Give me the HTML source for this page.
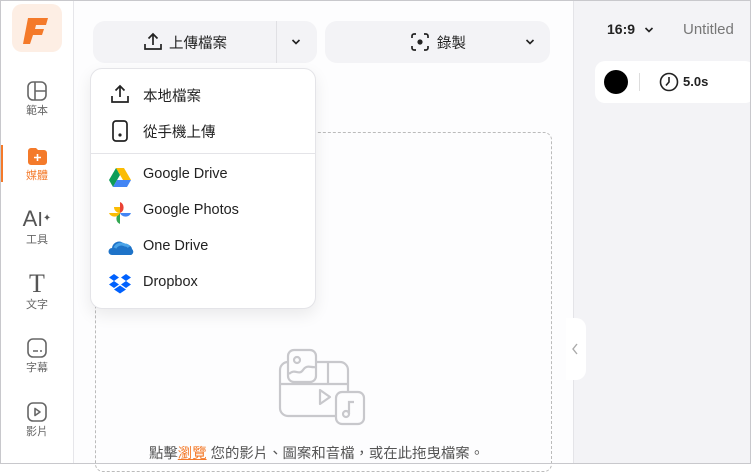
<!DOCTYPE html><html><head><meta charset="utf-8"><style>
*{box-sizing:border-box;margin:0;padding:0}
body{width:751px;height:464px;overflow:hidden;background:#fff;font-family:"Liberation Sans","Noto Sans CJK TC",sans-serif;position:relative;color:#222}
.frame{position:absolute;inset:0;border:1px solid #c8c8cc;pointer-events:none;z-index:10}
.side{position:absolute;left:0;top:0;width:74px;height:464px;background:#fff;border-right:1px solid #e6e6ea}
.logo{position:absolute;left:12px;top:4px;width:50px;height:48px;background:#fdeee4;border-radius:10px}
.item{position:absolute;left:0;width:74px;text-align:center;font-size:11px;color:#666}
.main{position:absolute;left:74px;top:0;width:499px;height:464px;background:#fdfdfe}
.right{position:absolute;left:573px;top:0;width:178px;height:464px;background:#f3f3f6;border-left:1px solid #e4e4e8}
.btn{position:absolute;top:21px;height:42px;background:#f3f3f6;border-radius:12px}
.menu{position:absolute;left:90px;top:68px;width:226px;height:241px;background:#fff;border:1px solid #e4e4e8;border-radius:12px;box-shadow:0 6px 16px rgba(0,0,0,.08);z-index:5}
.mi{position:absolute;left:52px;font-size:14.5px;color:#222}
.dash{position:absolute;left:95px;top:132px;width:457px;height:340px;border:1px dashed #bbb;border-radius:8px}
</style></head><body>
<div class="side">
<div class="logo"><svg width="50" height="48"><path d="M16 14h20l-2 7H24l-1 4h9l-2 6h-9l-3 9h-7z" fill="#f47a2a"/></svg></div>
<div style="position:absolute;left:0;top:145px;width:3px;height:37px;background:#f47a2a"></div>
<div class="item" style="top:80px"><svg width="22" height="22"><rect x="2" y="2" width="18" height="18" rx="5" fill="none" stroke="#666" stroke-width="1.6"/><path d="M9 2v18M9 11h11" stroke="#666" stroke-width="1.6"/></svg><div style="margin-top:-3px">範本</div></div>
<div class="item" style="top:145px;color:#f47a2a"><svg width="22" height="22"><path d="M2 6a3 3 0 0 1 3-3h5l2 2h6a3 3 0 0 1 3 3v9a3 3 0 0 1-3 3H5a3 3 0 0 1-3-3z" fill="#f47a2a"/><path d="M11.5 9v7M8 12.5h7" stroke="#fff" stroke-width="1.6"/></svg><div style="margin-top:-3px">媒體</div></div>
<div class="item" style="top:208px"><div style="font-size:22px;line-height:22px;color:#555">A<span style="font-size:20px">I</span><span style="font-size:10px;vertical-align:top">✦</span></div><div style="margin-top:0px">工具</div></div>
<div class="item" style="top:272px"><div style="font-size:26px;line-height:24px;color:#555;font-family:'Liberation Serif',serif">T</div><div>文字</div></div>
<div class="item" style="top:337px"><svg width="22" height="22"><rect x="2" y="2" width="18" height="18" rx="5" fill="none" stroke="#666" stroke-width="1.6"/><path d="M7 14h5M14 14h2" stroke="#666" stroke-width="1.6"/></svg><div style="margin-top:-3px">字幕</div></div>
<div class="item" style="top:401px"><svg width="22" height="22"><rect x="2" y="2" width="18" height="18" rx="5" fill="none" stroke="#666" stroke-width="1.6"/><path d="M9 7.5v7l5-3.5z" fill="none" stroke="#666" stroke-width="1.6" stroke-linejoin="round"/></svg><div style="margin-top:-3px">影片</div></div>
</div>
<div class="main"></div>
<div class="dash"></div>
<div class="btn" style="left:93px;width:224px"><div style="position:absolute;left:183px;top:0;width:1px;height:42px;background:#e0e0e4"></div>
<svg style="position:absolute;left:50px;top:11px" width="20" height="20"><path d="M10 13V2M5.5 6.5 10 2l4.5 4.5M2 12v5h16v-5" fill="none" stroke="#222" stroke-width="1.7"/></svg>
<span style="position:absolute;left:76px;top:11px;font-size:14.5px">上傳檔案</span>
<svg style="position:absolute;left:198px;top:17px" width="10" height="8"><path d="M1.5 2 5 5.5 8.5 2" fill="none" stroke="#222" stroke-width="1.6"/></svg></div>
<div class="btn" style="left:325px;width:225px">
<svg style="position:absolute;left:85px;top:11px" width="20" height="20"><path d="M2 6V4a2 2 0 0 1 2-2h2M14 2h2a2 2 0 0 1 2 2v2M18 14v2a2 2 0 0 1-2 2h-2M6 18H4a2 2 0 0 1-2-2v-2" fill="none" stroke="#222" stroke-width="1.7"/><circle cx="10" cy="10" r="2.6" fill="#222"/></svg>
<span style="position:absolute;left:112px;top:11px;font-size:14.5px">錄製</span>
<svg style="position:absolute;left:200px;top:17px" width="10" height="8"><path d="M1.5 2 5 5.5 8.5 2" fill="none" stroke="#222" stroke-width="1.6"/></svg></div>
<div class="menu">
<svg style="position:absolute;left:19px;top:15px" width="20" height="20"><path d="M10 13V2M5.5 6.5 10 2l4.5 4.5M2 12v6h16v-6" fill="none" stroke="#222" stroke-width="1.7"/></svg>
<span class="mi" style="top:16px">本地檔案</span>
<svg style="position:absolute;left:20px;top:51px" width="18" height="22"><rect x="2" y="1" width="14" height="20" rx="3" fill="none" stroke="#222" stroke-width="1.7"/><circle cx="9" cy="15" r="1.6" fill="#222"/></svg>
<span class="mi" style="top:52px">從手機上傳</span>
<div style="position:absolute;left:0;top:84px;width:224px;height:1px;background:#e4e4e8"></div>
<svg style="position:absolute;left:17px;top:97px" width="24" height="22"><path d="M8 2h8l7 12h-8z" fill="#fbbc04"/><path d="M8 2 1 14l4 7 7-12z" fill="#0f9d58"/><path d="M5 21h14l4-7H9z" fill="#4285f4"/></svg>
<span class="mi" style="top:97px">Google Drive</span>
<svg style="position:absolute;left:17px;top:132px" width="24" height="24"><path d="M6 6h6v6A6 6 0 0 1 6 6z" fill="#fbbc04"/><path d="M12 1a6 6 0 0 1 0 11z" fill="#ea4335"/><path d="M12 12h11a6 6 0 0 1-11 0z" fill="#4285f4"/><path d="M12 12v11a6 6 0 0 1 0-11z" fill="#34a853"/><path d="M1 12h11A6 6 0 0 1 1 12z" fill="#fbbc04"/></svg>
<span class="mi" style="top:133px">Google Photos</span>
<svg style="position:absolute;left:17px;top:170px" width="26" height="18"><path d="M4 16a3.5 3.5 0 0 1 0-7 7 7 0 0 1 13-3 5 5 0 0 1 7 4 3.5 3.5 0 0 1-1 6z" fill="#1e73c8"/><path d="M7 9a7 7 0 0 1 10-3 5 5 0 0 1 4 2" fill="none" stroke="#4aa3e8" stroke-width="3"/></svg>
<span class="mi" style="top:169px">One Drive</span>
<svg style="position:absolute;left:17px;top:204px" width="24" height="22"><g fill="#0061fe"><path d="M6 1 1 4.5 6 8l5-3.5zM18 1l-5 3.5L18 8l5-3.5zM1 11.5 6 15l5-3.5L6 8zM23 11.5 18 15l-5-3.5L18 8zM6 16.5l6 4 6-4-6-4z"/></g></svg>
<span class="mi" style="top:205px">Dropbox</span>
</div>
<svg style="position:absolute;left:278px;top:348px" width="90" height="78" fill="none" stroke="#c8c8cc" stroke-width="2.2"><rect x="2" y="14" width="68" height="54" rx="8"/><path d="M2 36h68M50 14v22"/><rect x="10" y="2" width="28" height="32" rx="6" fill="#fdfdfe"/><circle cx="19" cy="12" r="3"/><path d="M11 26c6-6 10 2 14-4s8-2 12-3"/><path d="M42 42v14l10-7z" stroke-linejoin="round"/><rect x="58" y="44" width="28" height="32" rx="6" fill="#fdfdfe"/><circle cx="68" cy="66" r="3"/><path d="M71 66V54h5"/></svg>
<div style="position:absolute;left:149px;top:442px;font-size:14.4px;color:#555;white-space:nowrap">點擊<span style="color:#f47a2a;text-decoration:underline">瀏覽</span> 您的影片、圖案和音檔，或在此拖曳檔案。</div>
<div class="right">
<span style="position:absolute;left:33px;top:21px;font-size:14px;font-weight:bold;color:#222">16:9</span>
<svg style="position:absolute;left:70px;top:26px" width="10" height="8"><path d="M1.5 2 5 5.5 8.5 2" fill="none" stroke="#222" stroke-width="1.6"/></svg>
<span style="position:absolute;left:109px;top:21px;font-size:15px;color:#777">Untitled</span>
<div style="position:absolute;left:21px;top:61px;width:160px;height:42px;background:#fff;border-radius:10px">
<div style="position:absolute;left:9px;top:9px;width:24px;height:24px;border-radius:50%;background:#000"></div>
<div style="position:absolute;left:44px;top:12px;width:1px;height:18px;background:#ddd"></div>
<svg style="position:absolute;left:64px;top:11px" width="20" height="20"><circle cx="10" cy="10" r="8.5" fill="none" stroke="#222" stroke-width="1.6"/><path d="M10 5v5l-3 3.5" fill="none" stroke="#222" stroke-width="1.6"/></svg>
<span style="position:absolute;left:88px;top:13px;font-size:13px;font-weight:bold;color:#222">5.0s</span></div>
</div>
<div style="position:absolute;left:566px;top:318px;width:20px;height:62px;background:#fff;border-radius:0 10px 10px 0"></div>
<svg style="position:absolute;left:571px;top:343px" width="8" height="12"><path d="M6 1 2 6l4 5" fill="none" stroke="#aaa" stroke-width="1.4"/></svg>
<div class="frame"></div>
</body></html>
